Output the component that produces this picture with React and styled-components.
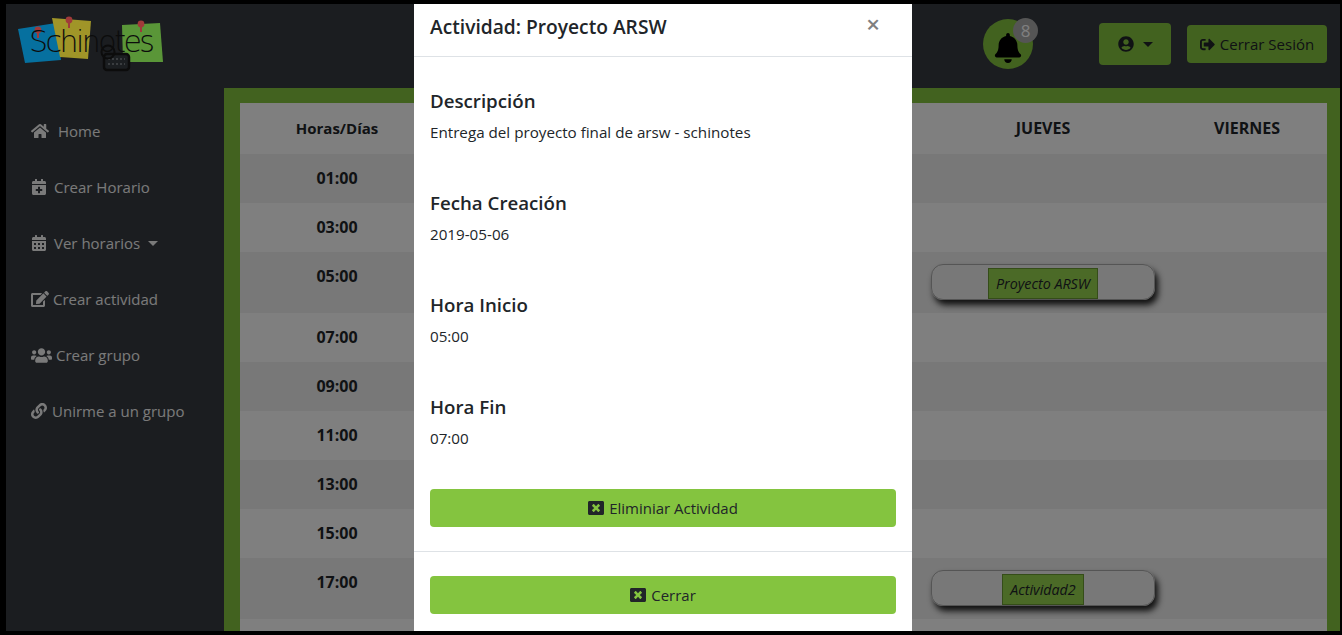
import React from 'react';
import styled, { createGlobalStyle } from 'styled-components';
import {
  FaHome,
  FaCalendarPlus,
  FaCalendarAlt,
  FaEdit,
  FaUsers,
  FaLink,
  FaUserCircle,
  FaBell,
  FaWindowClose,
  FaSignOutAlt,
} from 'react-icons/fa';

const GREEN = '#84c43f';

const hours = [
  { hour: '01:00' },
  { hour: '03:00' },
  { hour: '05:00', activity: 'Proyecto ARSW' },
  { hour: '07:00' },
  { hour: '09:00' },
  { hour: '11:00' },
  { hour: '13:00' },
  { hour: '15:00' },
  { hour: '17:00', activity: 'Actividad2' },
  { hour: '' },
];

const menu = [
  { label: 'Home', icon: FaHome, size: 18, gap: 9 },
  { label: 'Crear Horario', icon: FaCalendarPlus, size: 16, gap: 7 },
  { label: 'Ver horarios', icon: FaCalendarAlt, size: 16, gap: 7, caret: true },
  { label: 'Crear actividad', icon: FaEdit, size: 18, gap: 4 },
  { label: 'Crear grupo', icon: FaUsers, size: 21, gap: 4 },
  { label: 'Unirme a un grupo', icon: FaLink, size: 16, gap: 5 },
];

const details = [
  { title: 'Descripción', text: 'Entrega del proyecto final de arsw - schinotes' },
  { title: 'Fecha Creación', text: '2019-05-06' },
  { title: 'Hora Inicio', text: '05:00' },
  { title: 'Hora Fin', text: '07:00' },
];

function Logo() {
  return (
    <LogoSvg viewBox="0 0 160 60" width="160" height="60">
      <polygon points="12,15 50,9 55,46 19,49" fill="#06709f" />
      <polygon points="46,4 85,7 82,45 54,43" fill="#a09528" />
      <polygon points="116,11 154,9 157,48 117,48" fill="#5a9638" />
      <circle cx="32" cy="16" r="3.4" fill="#a03a3a" />
      <path d="M32 18v6" stroke="#a03a3a" strokeWidth="2" />
      <circle cx="63" cy="6" r="3.4" fill="#a03a3a" />
      <path d="M63 8v6" stroke="#a03a3a" strokeWidth="2" />
      <circle cx="135" cy="10" r="3.4" fill="#a03a3a" />
      <path d="M135 12v6" stroke="#a03a3a" strokeWidth="2" />
      <rect x="98" y="40" width="25" height="16" rx="3" fill="#1b1e21" stroke="#0c0c0c" strokeWidth="2.5" />
      <path d="M102 45h17M102 50h17" stroke="#3a3d40" strokeWidth="2" strokeDasharray="2 2" />
      <circle cx="102" cy="38" r="6.5" fill="none" stroke="#0c0c0c" strokeWidth="2" />
      <LogoText x="23" y="38" textLength="126">
        Schinotes
      </LogoText>
    </LogoSvg>
  );
}

export default function App() {
  return (
    <>
      <GlobalStyle />
      <Frame>
        <Header>
          <Logo />
          <HeaderActions>
            <BellCircle>
              <FaBell size={30} />
              <BellBadge>8</BellBadge>
            </BellCircle>
            <UserButton>
              <FaUserCircle size={16} />
              <Caret />
            </UserButton>
            <LogoutButton>
              <FaSignOutAlt size={15} />
              Cerrar Sesión
            </LogoutButton>
          </HeaderActions>
        </Header>
        <Main>
          <Sidebar>
            {menu.map(({ label, icon: Icon, size, gap, caret }) => (
              <MenuItem key={label} $gap={gap}>
                <Icon size={size} />
                {label}
                {caret && <SideCaret />}
              </MenuItem>
            ))}
          </Sidebar>
          <Content>
            <Schedule>
              <colgroup>
                <Column $width={194} />
                <Column $width={485} />
                <Column $width={248} />
                <Column $width={160} />
              </colgroup>
              <thead>
                <tr>
                  <HeadCell $size={15}>Horas/Días</HeadCell>
                  <HeadCell />
                  <HeadCell>JUEVES</HeadCell>
                  <HeadCell>VIERNES</HeadCell>
                </tr>
              </thead>
              <tbody>
                {hours.map(({ hour, activity }, i) => (
                  <Row key={i} $odd={i % 2 === 0}>
                    <HourCell>{hour}</HourCell>
                    <Cell />
                    <Cell>
                      {activity && (
                        <Pill>
                          <ActivityTag>{activity}</ActivityTag>
                        </Pill>
                      )}
                    </Cell>
                    <Cell />
                  </Row>
                ))}
              </tbody>
            </Schedule>
          </Content>
        </Main>
        <Backdrop />
        <Modal>
          <ModalHeader>
            <ModalTitle>Actividad: Proyecto ARSW</ModalTitle>
            <CloseX>×</CloseX>
          </ModalHeader>
          <ModalBody>
            {details.map(({ title, text }) => (
              <Detail key={title}>
                <DetailTitle>{title}</DetailTitle>
                <DetailText>{text}</DetailText>
              </Detail>
            ))}
            <WideButton>
              <FaWindowClose size={16} />
              Eliminiar Actividad
            </WideButton>
          </ModalBody>
          <ModalFooter>
            <WideButton>
              <FaWindowClose size={16} />
              Cerrar
            </WideButton>
          </ModalFooter>
        </Modal>
      </Frame>
    </>
  );
}

const GlobalStyle = createGlobalStyle`
  html, body {
    margin: 0;
    height: 100%;
    overflow: hidden;
    background: #000;
  }
  body {
    font-family: 'Open Sans', 'Noto Sans', sans-serif;
    font-size: 15px;
    color: #212529;
  }
`;

const Frame = styled.div`
  position: relative;
  box-sizing: border-box;
  width: 1334px;
  height: 627px;
  margin: 4px 2px 4px 6px;
  overflow: hidden;
  background: #363a40;
`;

const Header = styled.header`
  display: flex;
  align-items: center;
  justify-content: space-between;
  height: 84px;
  padding: 0 13px 0 0;
  box-sizing: border-box;
`;

const LogoSvg = styled.svg`
  display: block;
  position: relative;
  z-index: 1;
  margin-top: -4px;
`;

const LogoText = styled.text`
  font-family: 'DejaVu Sans', sans-serif;
  font-weight: 200;
  font-size: 30px;
  fill: #0c0c0c;
`;

const HeaderActions = styled.div`
  display: flex;
  align-items: center;
  margin-top: -4px;
`;

const BellCircle = styled.div`
  position: relative;
  display: flex;
  align-items: center;
  justify-content: center;
  width: 50px;
  height: 50px;
  margin-right: 66px;
  padding-top: 8px;
  box-sizing: border-box;
  border-radius: 50%;
  background: ${GREEN};
  color: #000;
`;

const BellBadge = styled.span`
  position: absolute;
  top: -1px;
  right: -5px;
  width: 25px;
  height: 25px;
  border-radius: 50%;
  background: #aaa;
  color: #fff;
  font-size: 17px;
  line-height: 25px;
  text-align: center;
`;

const UserButton = styled.button`
  display: flex;
  align-items: center;
  justify-content: center;
  gap: 9px;
  width: 72px;
  height: 42px;
  margin-right: 16px;
  padding: 0;
  border: 0;
  border-radius: 4px;
  background: ${GREEN};
  color: #212529;
`;

const Caret = styled.span`
  width: 0;
  height: 0;
  border-top: 5px solid #212529;
  border-left: 5px solid transparent;
  border-right: 5px solid transparent;
`;

const LogoutButton = styled.button`
  display: flex;
  align-items: center;
  justify-content: center;
  gap: 5px;
  width: 140px;
  height: 38px;
  padding: 0;
  border: 0;
  border-radius: 4px;
  background: ${GREEN};
  color: #212529;
  font-family: inherit;
  font-size: 15px;
`;

const Main = styled.div`
  display: flex;
  height: 543px;
`;

const Sidebar = styled.nav`
  flex: 0 0 218px;
  padding: 15px 0 0 25px;
  box-sizing: border-box;
`;

const MenuItem = styled.a`
  display: flex;
  align-items: center;
  gap: ${(p) => p.$gap}px;
  height: 56px;
  color: #f4f4f4;
  font-size: 15px;
`;

const SideCaret = styled(Caret)`
  margin-left: 1px;
  border-top-color: #f4f4f4;
`;

const Content = styled.main`
  flex: 1;
  padding: 15px 13px 0 16px;
  background: ${GREEN};
  overflow: hidden;
`;

const Schedule = styled.table`
  width: 1087px;
  table-layout: fixed;
  border-collapse: collapse;
  background: #fff;
`;

const Column = styled.col`
  width: ${(p) => p.$width}px;
`;

const HeadCell = styled.th`
  height: 51px;
  box-sizing: border-box;
  padding: 13px 12px 14px;
  font-size: ${(p) => p.$size || 16}px;
  font-weight: 700;
  line-height: 24px;
  text-align: center;
`;

const Row = styled.tr`
  background: ${(p) => (p.$odd ? '#f0f0f0' : '#fff')};
`;

const Cell = styled.td`
  padding: 12px 12px 13px;
  line-height: 24px;
`;

const HourCell = styled(Cell)`
  font-size: 16px;
  font-weight: 700;
  text-align: center;
  vertical-align: top;
`;

const Pill = styled.div`
  display: flex;
  justify-content: center;
  align-items: flex-end;
  height: 36px;
  box-sizing: border-box;
  border: 1px solid #aaa;
  border-radius: 12px;
  box-shadow: 3px 5px 6px #222;
`;

const ActivityTag = styled.span`
  padding: 0 7px;
  height: 31px;
  box-sizing: border-box;
  background: #96d44e;
  border: 1px solid #6a9a33;
  font-size: 14.3px;
  font-style: italic;
  line-height: 29px;
`;

const Backdrop = styled.div`
  position: absolute;
  inset: 0;
  background: rgba(0, 0, 0, 0.5);
`;

const Modal = styled.section`
  position: absolute;
  top: 0;
  bottom: 0;
  left: 408px;
  width: 498px;
  background: #fff;
  overflow: hidden;
`;

const ModalHeader = styled.div`
  display: flex;
  align-items: center;
  justify-content: space-between;
  height: 53px;
  box-sizing: border-box;
  padding: 0 32px 8px 16px;
  border-bottom: 1px solid #dee2e6;
`;

const ModalTitle = styled.h4`
  margin: 0;
  font-size: 19.2px;
  font-weight: 600;
`;

const CloseX = styled.span`
  color: #808080;
  font-size: 24px;
  font-weight: 600;
  line-height: 1;
  margin-bottom: 4px;
`;

const ModalBody = styled.div`
  padding: 32px 16px 24px;
`;

const Detail = styled.div`
  height: 102px;

  &:last-of-type {
    height: 94px;
  }
`;

const DetailTitle = styled.h5`
  margin: 0 0 7px;
  font-size: 18.7px;
  font-weight: 600;
  line-height: 24px;
`;

const DetailText = styled.p`
  margin: 0;
  font-size: 15.2px;
  line-height: 24px;
`;

const WideButton = styled.button`
  display: flex;
  align-items: center;
  justify-content: center;
  gap: 5px;
  width: 100%;
  height: 38px;
  padding: 0;
  border: 0;
  border-radius: 4px;
  background: ${GREEN};
  color: #212529;
  font-family: inherit;
  font-size: 15px;
`;

const ModalFooter = styled.div`
  padding: 24px 16px 0;
  border-top: 1px solid #dee2e6;
`;
